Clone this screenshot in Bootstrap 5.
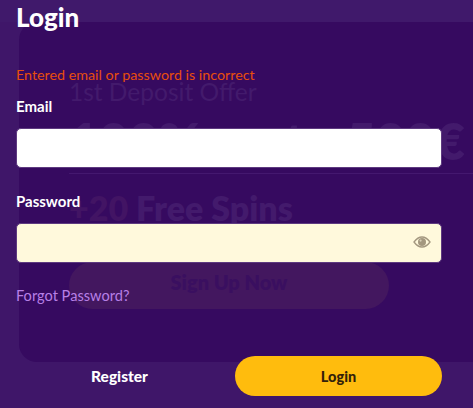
<!DOCTYPE html>
<html lang="en">
<head>
<meta charset="utf-8">
<link href="https://cdn.jsdelivr.net/npm/bootstrap@5.3.0/dist/css/bootstrap.min.css" rel="stylesheet">
<style>
html,body{height:100%;}
body{margin:0;background:#3f1669;font-family:"Lato","Noto Sans",sans-serif;overflow:hidden;color:#fff;}
.stage{position:relative;width:473px;height:408px;overflow:hidden;}
.topband{position:absolute;left:0;top:0;right:0;height:22px;background:#40196b;}
.promo{position:absolute;left:19px;top:22px;width:480px;height:340px;background:#360a60;border-radius:18px 0 0 18px;color:#431a6c;}
.promo-inner{position:absolute;left:50px;top:55px;width:420px;}
.ghost-a{font-size:24.5px;line-height:30px;}
.ghost-b{font-size:51.5px;line-height:50px;font-weight:800;margin-top:8px;white-space:nowrap;}
.ghost-rule{height:1px;background:#44186f;margin-top:8px;}
.ghost-c{font-size:34px;line-height:36px;font-weight:800;margin-top:16px;}
.ghost-plus{color:#421464;}
.ghost-btn{width:320px;height:47px;border-radius:24px;background:#43175f;color:#3a0f60;font-weight:800;font-size:20px;margin-top:36px;padding-bottom:8px;}
.formwrap{position:relative;padding:2px 31px 0 16px;height:408px;}
.ttl{font-size:26px;line-height:30px;font-weight:900;margin:0;}
.errmsg{color:#e84e0c;font-size:14.3px;line-height:18px;margin-top:34px;}
.lbl{font-size:15px;font-weight:700;line-height:18px;margin:0;}
.lbl-a{margin-top:13px;}
.lbl-b{margin-top:24px;}
.fld{height:40px;border-radius:5px;border:1px solid #5e3a80;background:#fff;margin-top:13px;}
.fld-b{background:#fff9dc;}
.fld:focus{background:#fff;border-color:#5e3a80;box-shadow:none;}
.fld-b:focus{background:#fff9dc;}
.pwd{position:relative;margin-top:13px;}
.pwd .fld{margin-top:0;}
.eye{position:absolute;right:11px;top:13px;width:18px;height:12px;}
.forgot{display:block;color:#b77fe6;font-size:14.6px;line-height:18px;text-decoration:none;margin-top:24px;}
.actions{position:absolute;left:16px;right:31px;top:356px;}
.reg{width:207px;font-size:15.5px;font-weight:900;color:#fff;padding:1px 0 0;height:40px;border:0;}
.reg:hover{color:#fff;}
.go{width:207px;height:40px;border-radius:20px;background:#ffbc0d;border:0;color:#33210a;font-weight:900;font-size:14.5px;padding:1px 0 0;}
.go:hover{background:#ffbc0d;color:#33210a;}
</style>
</head>
<body>
<div class="stage">
  <div class="topband"></div>
  <div class="promo">
    <div class="promo-inner">
      <div class="ghost-a">1st Deposit Offer</div>
      <div class="ghost-b">100% up to 500€</div>
      <div class="ghost-rule"></div>
      <div class="ghost-c"><span class="ghost-plus">+20</span> Free Spins</div>
      <div class="ghost-btn d-flex align-items-center justify-content-center">Sign Up Now</div>
    </div>
  </div>
  <form class="formwrap" onsubmit="return false">
    <h1 class="ttl">Login</h1>
    <div class="errmsg">Entered email or password is incorrect</div>
    <label class="lbl lbl-a d-block" for="em">Email</label>
    <input id="em" class="form-control fld" type="email">
    <label class="lbl lbl-b d-block" for="pw">Password</label>
    <div class="pwd">
      <input id="pw" class="form-control fld fld-b" type="password">
      <svg class="eye" viewBox="0 0 18 12" aria-hidden="true"><path d="M1 6C3.500 2.600 6 1 9 1s5.500 1.600 8 5c-2.500 3.400-5 5-8 5S3.500 9.400 1 6z" fill="none" stroke="#a3977f" stroke-width="1.300"/><circle cx="9" cy="6" r="4" fill="#a3977f"/><circle cx="7.600" cy="4.600" r="1.100" fill="#d8d0b8"/></svg>
    </div>
    <a class="forgot" href="#">Forgot Password?</a>
    <div class="actions d-flex justify-content-between">
      <button type="button" class="btn reg">Register</button>
      <button type="button" class="btn go">Login</button>
    </div>
  </form>
</div>
<script src="https://cdn.jsdelivr.net/npm/bootstrap@5.3.0/dist/js/bootstrap.bundle.min.js"></script>
</body>
</html>
